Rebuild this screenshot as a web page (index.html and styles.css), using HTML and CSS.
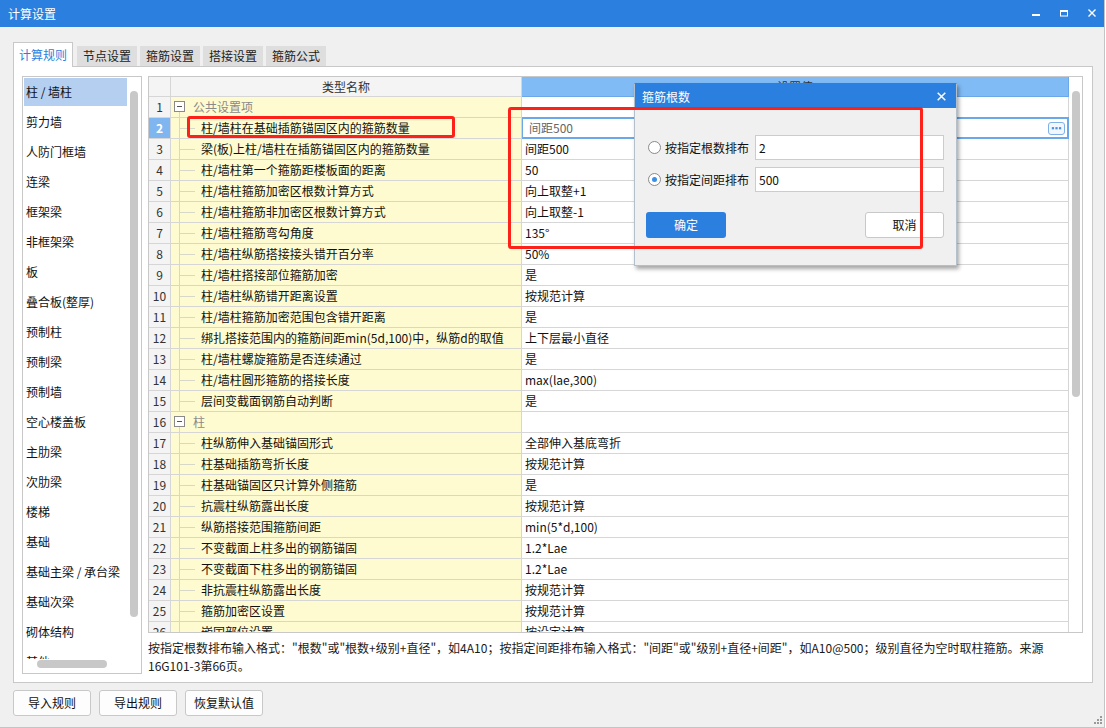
FILE: index.html
```html
<!DOCTYPE html>
<html lang="zh-CN">
<head>
<meta charset="utf-8">
<title>计算设置</title>
<link rel="stylesheet" href="styles.css">
</head>
<body>
<div class="window">
  <div class="titlebar">
    <span class="title">计算设置</span>
    <div class="controls">
      <svg viewBox="0 0 8 8"><rect x="0" y="5" width="8" height="2" fill="#fff"/></svg>
      <svg viewBox="0 0 8 8"><rect x="0.5" y="1.5" width="7" height="5.5" fill="none" stroke="#fff" stroke-width="1"/><rect x="0" y="1" width="8" height="2" fill="#fff"/></svg>
      <svg viewBox="0 0 8 8"><path d="M0.5 0.5 L7.5 7.5 M7.5 0.5 L0.5 7.5" stroke="#fff" stroke-width="1.4" fill="none"/></svg>
    </div>
  </div>

  <div class="tabs">
    <div class="tab active">计算规则</div>
    <div class="tab first">节点设置</div>
    <div class="tab">箍筋设置</div>
    <div class="tab">搭接设置</div>
    <div class="tab">箍筋公式</div>
  </div>

  <div class="panel">
    <div class="list">
      <div class="item sel">柱 / 墙柱</div>
      <div class="item">剪力墙</div>
      <div class="item">人防门框墙</div>
      <div class="item">连梁</div>
      <div class="item">框架梁</div>
      <div class="item">非框架梁</div>
      <div class="item">板</div>
      <div class="item">叠合板(整厚)</div>
      <div class="item">预制柱</div>
      <div class="item">预制梁</div>
      <div class="item">预制墙</div>
      <div class="item">空心楼盖板</div>
      <div class="item">主肋梁</div>
      <div class="item">次肋梁</div>
      <div class="item">楼梯</div>
      <div class="item">基础</div>
      <div class="item">基础主梁 / 承台梁</div>
      <div class="item">基础次梁</div>
      <div class="item">砌体结构</div>
      <div class="item">其他</div>
      <div class="vthumb"></div>
      <div class="hbar"><div class="hthumb"></div></div>
    </div>

    <div class="main">
      <div class="table">
        <div class="grid">
          <div class="row head"><div></div><div>类型名称</div><div class="hv">设置值</div></div>
          <div class="row"><div class="num">1</div><div class="name group"><span class="box"></span>公共设置项</div><div class="val"></div></div>
          <div class="row"><div class="num sel">2</div><div class="name">柱/墙柱在基础插筋锚固区内的箍筋数量</div><div class="val edit"><span>间距500</span><span class="more"><svg viewBox="0 0 16 11"><rect x="3" y="4" width="2.4" height="2.4" fill="#4a90e0"/><rect x="6.8" y="4" width="2.4" height="2.4" fill="#4a90e0"/><rect x="10.6" y="4" width="2.4" height="2.4" fill="#4a90e0"/></svg></span></div></div>
          <div class="row"><div class="num">3</div><div class="name">梁(板)上柱/墙柱在插筋锚固区内的箍筋数量</div><div class="val">间距500</div></div>
          <div class="row"><div class="num">4</div><div class="name">柱/墙柱第一个箍筋距楼板面的距离</div><div class="val">50</div></div>
          <div class="row"><div class="num">5</div><div class="name">柱/墙柱箍筋加密区根数计算方式</div><div class="val">向上取整+1</div></div>
          <div class="row"><div class="num">6</div><div class="name">柱/墙柱箍筋非加密区根数计算方式</div><div class="val">向上取整-1</div></div>
          <div class="row"><div class="num">7</div><div class="name">柱/墙柱箍筋弯勾角度</div><div class="val">135°</div></div>
          <div class="row"><div class="num">8</div><div class="name">柱/墙柱纵筋搭接接头错开百分率</div><div class="val">50%</div></div>
          <div class="row"><div class="num">9</div><div class="name">柱/墙柱搭接部位箍筋加密</div><div class="val">是</div></div>
          <div class="row"><div class="num">10</div><div class="name">柱/墙柱纵筋错开距离设置</div><div class="val">按规范计算</div></div>
          <div class="row"><div class="num">11</div><div class="name">柱/墙柱箍筋加密范围包含错开距离</div><div class="val">是</div></div>
          <div class="row"><div class="num">12</div><div class="name">绑扎搭接范围内的箍筋间距min(5d,100)中，纵筋d的取值</div><div class="val">上下层最小直径</div></div>
          <div class="row"><div class="num">13</div><div class="name">柱/墙柱螺旋箍筋是否连续通过</div><div class="val">是</div></div>
          <div class="row"><div class="num">14</div><div class="name">柱/墙柱圆形箍筋的搭接长度</div><div class="val">max(lae,300)</div></div>
          <div class="row"><div class="num">15</div><div class="name">层间变截面钢筋自动判断</div><div class="val">是</div></div>
          <div class="row"><div class="num">16</div><div class="name group"><span class="box"></span>柱</div><div class="val"></div></div>
          <div class="row"><div class="num">17</div><div class="name">柱纵筋伸入基础锚固形式</div><div class="val">全部伸入基底弯折</div></div>
          <div class="row"><div class="num">18</div><div class="name">柱基础插筋弯折长度</div><div class="val">按规范计算</div></div>
          <div class="row"><div class="num">19</div><div class="name">柱基础锚固区只计算外侧箍筋</div><div class="val">是</div></div>
          <div class="row"><div class="num">20</div><div class="name">抗震柱纵筋露出长度</div><div class="val">按规范计算</div></div>
          <div class="row"><div class="num">21</div><div class="name">纵筋搭接范围箍筋间距</div><div class="val">min(5*d,100)</div></div>
          <div class="row"><div class="num">22</div><div class="name">不变截面上柱多出的钢筋锚固</div><div class="val">1.2*Lae</div></div>
          <div class="row"><div class="num">23</div><div class="name">不变截面下柱多出的钢筋锚固</div><div class="val">1.2*Lae</div></div>
          <div class="row"><div class="num">24</div><div class="name">非抗震柱纵筋露出长度</div><div class="val">按规范计算</div></div>
          <div class="row"><div class="num">25</div><div class="name">箍筋加密区设置</div><div class="val">按规范计算</div></div>
          <div class="row"><div class="num">26</div><div class="name">嵌固部位设置</div><div class="val">按设定计算</div></div>
        </div>
        <div class="vtrack"><div class="thumb"></div></div>
      </div>
      <div class="desc">按指定根数排布输入格式："根数"或"根数+级别+直径"，如4A10；按指定间距排布输入格式："间距"或"级别+直径+间距"，如A10@500；级别直径为空时取柱箍筋。来源<br>16G101-3第66页。</div>
    </div>
  </div>

  <div class="buttons">
    <div class="btn">导入规则</div>
    <div class="btn">导出规则</div>
    <div class="btn">恢复默认值</div>
  </div>

  <div class="dialog">
    <div class="dtitle">
      <span>箍筋根数</span>
      <svg class="dclose" viewBox="0 0 9 9"><path d="M0.7 0.7 L8.3 8.3 M8.3 0.7 L0.7 8.3" stroke="#fff" stroke-width="1.5" fill="none"/></svg>
    </div>
    <div class="dbody">
      <div class="drow"><span class="radio"></span><span class="rlabel">按指定根数排布</span><div class="input">2</div></div>
      <div class="drow"><span class="radio on"></span><span class="rlabel">按指定间距排布</span><div class="input">500</div></div>
      <div class="dbtns"><div class="ok">确定</div><div class="cancel">取消</div></div>
    </div>
  </div>

  <div class="mark m1"></div>
  <div class="mark m2"></div>

  <svg class="grip" viewBox="0 0 8 8"><rect x="6" y="0" width="2" height="2" fill="#9a9a9a"/><rect x="3" y="3" width="2" height="2" fill="#9a9a9a"/><rect x="6" y="3" width="2" height="2" fill="#9a9a9a"/><rect x="0" y="6" width="2" height="2" fill="#9a9a9a"/><rect x="3" y="6" width="2" height="2" fill="#9a9a9a"/><rect x="6" y="6" width="2" height="2" fill="#9a9a9a"/></svg>
</div>
</body>
</html>
```

FILE: styles.css
```css
* { box-sizing: border-box; margin: 0; padding: 0; }
body {
  width: 1106px; height: 728px; overflow: hidden; background: #fff;
  font-family: "Noto Sans CJK SC", "Microsoft YaHei", sans-serif;
  font-size: 12px; color: #1a1a1a;
}
.window {
  position: relative; width: 1105px; height: 728px; background: #f0f0f0;
  border-right: 1px solid #c4c4c4; border-bottom: 1px solid #c4c4c4;
}
.titlebar {
  height: 27px; background: #2b7fde; color: #fff;
  display: flex; align-items: flex-start; padding: 0 8px 0 8px;
}
.title { line-height: 27px; }
.controls { margin-left: auto; display: flex; gap: 20px; padding-top: 9px; }
.controls svg { width: 8px; height: 8px; display: block; }

.tabs {
  display: flex; align-items: flex-end; margin-top: 15px; padding-left: 13px;
  height: 24px; position: relative; z-index: 1;
}
.tab {
  width: 60px; height: 20px; background: #dedede; margin-left: 3px;
  text-align: center; line-height: 20px; color: #222;
}
.tab.first { margin-left: 4px; }
.tab.active {
  margin-left: 0; height: 25px; margin-bottom: -1px; background: #fff;
  border: 1px solid #c8c8c8; border-bottom: none; color: #2b7fde; line-height: 24px;
}

.panel {
  margin-left: 13px; width: 1080px; height: 617px; background: #fff;
  border: 1px solid #c8c8c8; display: flex; gap: 6px; padding: 9px 10px 0 8px;
}
.list {
  position: relative; width: 120px; height: 598px; border: 1px solid #c8c8c8;
  padding: 1px 0 0 1px; overflow: hidden; flex: none;
}
.item {
  width: 103px; height: 28px; margin-bottom: 2px; line-height: 28px;
  padding-left: 2px; white-space: nowrap; color: #111;
}
.item.sel { background: #b5cff0; }
.vthumb {
  position: absolute; left: 107px; top: 14px; width: 8px; height: 526px;
  border-radius: 4px; background: #c8c8c8;
}
.hbar { position: absolute; left: 0; right: 0; bottom: 0; height: 14px; background: #fff; }
.hthumb {
  position: absolute; left: 14px; top: 1px; width: 70px; height: 8px;
  border-radius: 4px; background: #c8c8c8;
}

.main { width: 935px; flex: none; display: flex; flex-direction: column; }
.table { height: 557px; border: 1px solid #c8c8c8; display: flex; overflow: hidden; flex: none; }
.grid { width: 920px; flex: none; }
.row { display: grid; grid-template-columns: 22px 351px 547px; height: 21px; }
.row > div {
  border-right: 1px solid #d6d6d6; border-bottom: 1px solid #d6d6d6;
  line-height: 20px; white-space: nowrap; overflow: hidden;
}
.row.head { height: 20px; }
.head > div { background: #f4f4f4; text-align: center; line-height: 19px; color: #333; }
.head > .hv { background: #80bbf6; border-right-color: #6aa8ea; border-bottom-color: #6aa8ea; }
.num { background: #f4f4f4; text-align: center; color: #333; }
.num.sel { background: #7fb6f0; color: #fff; font-weight: bold; }
.name { background: #fffbd0; position: relative; padding-left: 30px; color: #111; }
.name::before {
  content: ""; position: absolute; left: 8px; top: 0; bottom: 0;
  border-left: 1px solid #d8d8c8;
}
.name::after {
  content: ""; position: absolute; left: 9px; top: 10px; width: 15px;
  border-top: 1px solid #d8d8c8;
}
.name.group { padding-left: 22px; color: #8a8a8a; }
.name.group::before { top: 15px; }
.name.group::after { display: none; }
.box {
  position: absolute; left: 3px; top: 4px; width: 11px; height: 11px;
  border: 1px solid #8a8a8a; background: #fff;
}
.box::after {
  content: ""; position: absolute; left: 2px; top: 4px; width: 5px;
  border-top: 1px solid #555;
}
.val { background: #fff; padding-left: 3px; color: #111; }
.val.edit {
  display: flex; align-items: center; padding-left: 7px; color: #666;
  border-right-color: #6aa8ea; border-bottom-color: #6aa8ea;
  box-shadow: inset 0 0 0 1px #6aa8ea, 0 -1px 0 #6aa8ea;
}
.more {
  margin-left: auto; margin-right: 3px; width: 17px; height: 13px;
  border: 1px solid #7fb0e6; border-radius: 3px; background: #f2f7fd; display: flex;
  flex: none;
}
.more svg { width: 15px; height: 11px; display: block; }
.vtrack { width: 13px; flex: none; background: #fff; padding: 14px 0 0 3px; }
.vtrack .thumb { width: 8px; height: 306px; border-radius: 4px; background: #c8c8c8; }
.desc { padding-top: 6px; line-height: 18px; color: #1a1a1a; white-space: nowrap; }

.buttons { display: flex; gap: 8px; margin-top: 7px; padding-left: 13px; }
.btn {
  width: 78px; height: 26px; border: 1px solid #c8c8c8; border-radius: 3px;
  background: #fdfdfd; text-align: center; line-height: 24px; color: #111;
}

.dialog {
  position: absolute; left: 634px; top: 83px; width: 323px; height: 183px;
  background: #f0f0f0; border: 1px solid #b4bfcc; border-top-color: #2b7fde;
  box-shadow: 2px 3px 4px rgba(0, 0, 0, 0.35);
}
.dtitle {
  height: 24px; background: #2b7fde; color: #fff; display: flex;
  align-items: center; padding: 0 10px 0 7px;
}
.dclose { margin-left: auto; width: 9px; height: 9px; display: block; }
.dbody { padding: 27px 12px 0 11px; }
.drow { display: flex; align-items: center; height: 25px; }
.drow + .drow { margin-top: 7px; }
.radio {
  width: 13px; height: 13px; border: 1px solid #8a8a8a; border-radius: 50%;
  background: #fff; margin-left: 2px; position: relative; flex: none;
}
.radio.on::after {
  content: ""; position: absolute; left: 3px; top: 3px; width: 5px; height: 5px;
  border-radius: 50%; background: #3a8ee6;
}
.rlabel { margin-left: 4px; color: #111; }
.input {
  margin-left: auto; width: 189px; height: 25px; border: 1px solid #cccccc;
  background: #fff; line-height: 23px; padding-left: 3px; color: #111;
}
.dbtns { display: flex; justify-content: space-between; margin-top: 20px; }
.ok {
  width: 80px; height: 26px; border-radius: 3px; background: #2b7fde;
  color: #fff; text-align: center; line-height: 26px;
}
.cancel {
  width: 79px; height: 26px; border: 1px solid #c8c8c8; border-radius: 3px;
  background: #fff; text-align: center; line-height: 24px; color: #111;
}

.mark { position: absolute; border: 3px solid #fd2219; border-radius: 3px; }
.m1 { left: 187px; top: 116px; width: 268px; height: 22px; }
.m2 { left: 508px; top: 107px; width: 415px; height: 142px; }

.grip { position: absolute; right: 2px; bottom: 3px; width: 8px; height: 8px; }
```
